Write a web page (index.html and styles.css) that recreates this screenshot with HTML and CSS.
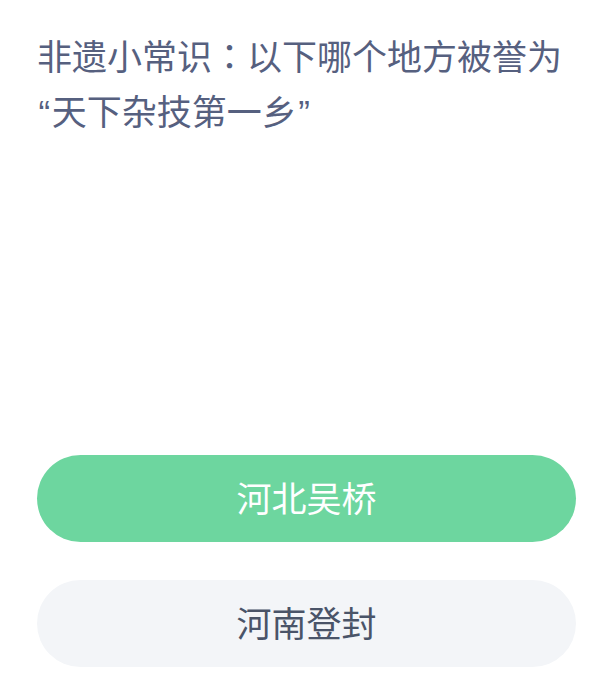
FILE: index.html
```html
<!DOCTYPE html>
<html lang="zh">
<head>
<meta charset="utf-8">
<link rel="stylesheet" href="styles.css">
</head>
<body>
<main class="page">
  <h1 class="question" lang="en">非遗小常识<span class="colon">：</span>以下哪个地方被誉为<wbr><span class="q">“</span>天下杂技第一乡<span class="q">”</span></h1>
  <div class="options">
    <div class="option option-correct">河北吴桥</div>
    <div class="option option-plain">河南登封</div>
  </div>
</main>
</body>
</html>
```
FILE: styles.css
```css
html, body {
  margin: 0;
  padding: 0;
  background: #ffffff;
}
.page {
  width: 595px;
  height: 684px;
  box-sizing: border-box;
  padding: 27px 19px 0 37px;
  font-family: "Noto Sans CJK SC", "Noto Sans", sans-serif;
}
.question {
  margin: 0;
  font-family: "Noto Sans CJK SC", sans-serif;
  font-size: 35px;
  line-height: 55px;
  font-weight: 400;
  color: #56607f;
}
.colon {
  font-family: "Noto Sans CJK TC", sans-serif;
}
.q {
  font-family: "Liberation Sans", sans-serif;
  line-height: 0;
  padding: 0 1.5px;
}
.options {
  margin-top: 318px;
  display: flex;
  flex-direction: column;
  gap: 38px;
}
.option {
  height: 87px;
  border-radius: 44px;
  display: flex;
  align-items: center;
  justify-content: center;
  font-size: 35px;
  padding-bottom: 4px;
  box-sizing: border-box;
}
.option-correct {
  background: #6dd69f;
  color: #ffffff;
}
.option-plain {
  background: #f3f5f8;
  color: #4a5468;
}
```
